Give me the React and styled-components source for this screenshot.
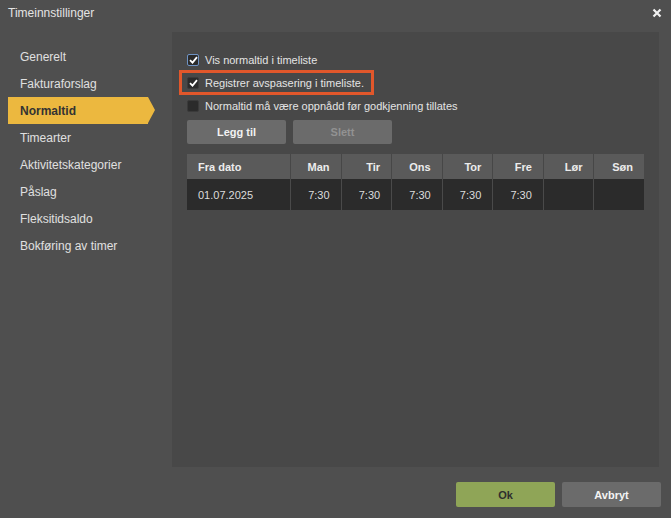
import React from "react";
import styled, { createGlobalStyle } from "styled-components";

const Global = createGlobalStyle`
  html, body { margin: 0; padding: 0; background: #4f4f4f; }
  body { font-family: "Liberation Sans", Arial, Helvetica, sans-serif; }
  * { box-sizing: border-box; }
`;

const Dialog = styled.div`
  width: 671px;
  height: 518px;
  background: #4f4f4f;
  display: flex;
  flex-direction: column;
  color: #e2e2e2;
`;

const Header = styled.div`
  height: 32px;
  display: flex;
  justify-content: space-between;
  align-items: flex-start;
  padding: 5px 9px 0 8px;
`;

const Title = styled.div`
  font-size: 12px;
  line-height: 16px;
  color: #e4e4e4;
`;

const Close = styled.button`
  border: 0;
  background: none;
  padding: 0;
  margin-top: 3px;
  width: 10px;
  height: 10px;
  display: flex;
  cursor: pointer;
`;

const Body = styled.div`
  display: flex;
  height: 435px;
  padding-right: 12px;
`;

const Sidebar = styled.nav`
  width: 172px;
  padding: 11px 0 0 8px;
  display: flex;
  flex-direction: column;
`;

const NavItem = styled.div`
  height: 27px;
  width: 140px;
  display: flex;
  align-items: center;
  padding-left: 12px;
  font-size: 12px;
  position: relative;
  color: ${(p) => (p.$active ? "#333" : "#e0e0e0")};
  font-weight: ${(p) => (p.$active ? 700 : 400)};
  background: ${(p) => (p.$active ? "#ecb83f" : "transparent")};
  &::after {
    content: "";
    display: ${(p) => (p.$active ? "block" : "none")};
    position: absolute;
    right: -7px;
    top: 0;
    border-top: 13.5px solid transparent;
    border-bottom: 13.5px solid transparent;
    border-left: 7px solid #ecb83f;
  }
`;

const Panel = styled.section`
  flex: 1;
  background: #484848;
  padding: 16px 15px 0 15px;
  display: flex;
  flex-direction: column;
`;

const CheckRow = styled.label`
  height: 23px;
  display: flex;
  align-items: center;
  gap: 6px;
  font-size: 11px;
  color: #e4e4e4;
  align-self: flex-start;
  outline: ${(p) => (p.$highlight ? "3px solid #e1572b" : "none")};
  outline-offset: ${(p) => (p.$highlight ? "-2px" : "0")};
  padding-right: ${(p) => (p.$highlight ? "9px" : "0")};
  margin-left: ${(p) => (p.$highlight ? "-7px" : "0")};
  padding-left: ${(p) => (p.$highlight ? "7px" : "0")};
`;

const Box = styled.span`
  width: 12px;
  height: 12px;
  border-radius: 2px;
  background: #2b2b2b;
  border: 1px solid ${(p) => (p.$focus ? "#6f93c4" : "#3a3a3a")};
  display: flex;
  align-items: center;
  justify-content: center;
`;

const Actions = styled.div`
  display: flex;
  gap: 7px;
  margin-top: 3px;
`;

const Btn = styled.button`
  width: 99px;
  height: 24px;
  border: 0;
  border-radius: 2px;
  background: #6b6b6b;
  color: ${(p) => (p.$disabled ? "#929292" : "#f2f2f2")};
  font-family: inherit;
  font-size: 11px;
  font-weight: 700;
  padding: 0;
`;

const Table = styled.div`
  margin-top: 10px;
  width: 457px;
  display: grid;
  grid-template-columns: 103px repeat(7, 1fr);
  column-gap: 1px;
  background: #474747;
`;

const Th = styled.div`
  height: 25px;
  background: #5a5a5a;
  font-size: 11px;
  font-weight: 700;
  color: #ececec;
  display: flex;
  align-items: center;
  justify-content: ${(p) => (p.$left ? "flex-start" : "flex-end")};
  padding: 0 11px;
`;

const Td = styled.div`
  height: 31px;
  background: #2b2b2b;
  font-size: 11px;
  color: #dcdcdc;
  display: flex;
  align-items: center;
  justify-content: ${(p) => (p.$left ? "flex-start" : "flex-end")};
  padding: 0 11px;
  box-shadow: ${(p) => (p.$left ? "none" : "-1px 0 0 #4a4a4a")};
`;

const Footer = styled.div`
  display: flex;
  justify-content: flex-end;
  gap: 7px;
  padding: 15px 10px 0 0;
`;

const FooterBtn = styled.button`
  width: 99px;
  height: 25px;
  border: 0;
  border-radius: 2px;
  font-family: inherit;
  font-size: 11px;
  font-weight: 700;
  background: ${(p) => (p.$primary ? "#8fa557" : "#6b6b6b")};
  color: ${(p) => (p.$primary ? "#2e2e2e" : "#f4f4f4")};
`;

const Check = () => (
  <svg width="9" height="8" viewBox="0 0 9 8">
    <path d="M1 4.2 L3.5 6.6 L8 1.2" fill="none" stroke="#fff" strokeWidth="1.8" />
  </svg>
);

const nav = [
  "Generelt",
  "Fakturaforslag",
  "Normaltid",
  "Timearter",
  "Aktivitetskategorier",
  "Påslag",
  "Fleksitidsaldo",
  "Bokføring av timer",
];

const days = ["Man", "Tir", "Ons", "Tor", "Fre", "Lør", "Søn"];
const values = ["7:30", "7:30", "7:30", "7:30", "7:30", "", ""];

export default function App() {
  return (
    <Dialog>
      <Global />
      <Header>
        <Title>Timeinnstillinger</Title>
        <Close aria-label="Lukk">
          <svg width="10" height="10" viewBox="0 0 10 10">
            <path d="M1.5 1.5 L8.5 8.5 M8.5 1.5 L1.5 8.5" stroke="#f2f2f2" strokeWidth="2.2" />
          </svg>
        </Close>
      </Header>
      <Body>
        <Sidebar>
          {nav.map((n) => (
            <NavItem key={n} $active={n === "Normaltid"}>
              {n}
            </NavItem>
          ))}
        </Sidebar>
        <Panel>
          <CheckRow>
            <Box $focus>
              <Check />
            </Box>
            Vis normaltid i timeliste
          </CheckRow>
          <CheckRow $highlight>
            <Box>
              <Check />
            </Box>
            Registrer avspasering i timeliste.
          </CheckRow>
          <CheckRow>
            <Box />
            Normaltid må være oppnådd før godkjenning tillates
          </CheckRow>
          <Actions>
            <Btn>Legg til</Btn>
            <Btn $disabled>Slett</Btn>
          </Actions>
          <Table>
            <Th $left>Fra dato</Th>
            {days.map((d) => (
              <Th key={d}>{d}</Th>
            ))}
            <Td $left>01.07.2025</Td>
            {values.map((v, i) => (
              <Td key={i}>{v}</Td>
            ))}
          </Table>
        </Panel>
      </Body>
      <Footer>
        <FooterBtn $primary>Ok</FooterBtn>
        <FooterBtn>Avbryt</FooterBtn>
      </Footer>
    </Dialog>
  );
}
